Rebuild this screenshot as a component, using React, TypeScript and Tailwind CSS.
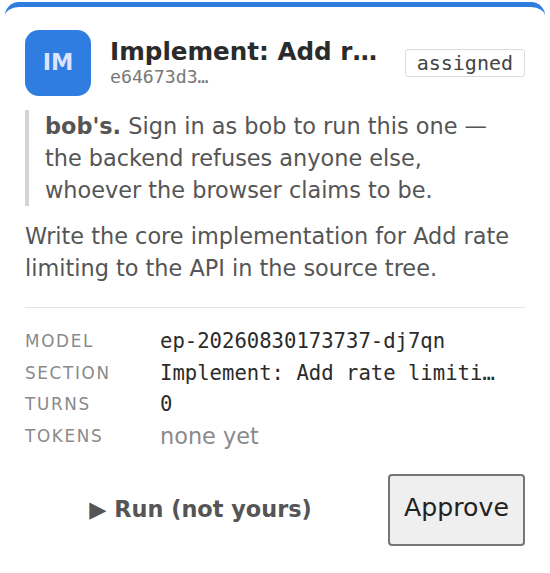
import { useState } from 'react'

const meta = [
  { label: 'Model', value: 'ep-20260830173737-dj7qn', mono: true },
  { label: 'Section', value: 'Implement: Add rate limiting to the API', mono: true },
  { label: 'Turns', value: '0', mono: true },
  { label: 'Tokens', value: 'none yet', mono: false },
]

export default function App() {
  const [approved, setApproved] = useState(false)

  return (
    <div className="min-h-screen bg-white px-[5px] pt-[2px] font-['DejaVu_Sans',sans-serif] text-[#555]">
      <article className="rounded-[14px] border-t-[5px] border-[#2f7de1] bg-white px-5 pb-5 pt-[23px]">
        <header className="flex items-center gap-[19px]">
          <div className="grid size-[66px] shrink-0 place-items-center rounded-[14px] bg-[#2f7de1] text-[22.4px] font-bold text-[#dde3ff]">
            IM
          </div>
          <div className="min-w-0 flex-1 pb-[2px]">
            <h2 className="truncate text-[24.6px] font-bold leading-[29px] text-[#2b2b2b]">
              Implement: Add rate limiting to the API
            </h2>
            <p className="truncate font-['DejaVu_Sans_Mono',monospace] text-[18.2px] leading-[21px] text-[#777]">
              e64673d3…
            </p>
          </div>
          <span className="mt-[19px] shrink-0 self-start rounded-[3px] border border-[#dcdcdc] px-[11px] font-['DejaVu_Sans_Mono',monospace] text-[20px] leading-[26px] text-[#444]">
            assigned
          </span>
        </header>

        <blockquote className="mt-[14px] border-l-[4px] border-[#d4d4d4] pl-[16px] text-[22.4px] leading-[32px]">
          <strong className="font-bold">bob's.</strong> Sign in as bob to run this one — the backend refuses
          anyone else, whoever the browser claims to be.
        </blockquote>

        <p className="mt-[14px] text-[22.4px] leading-[32px]">
          Write the core implementation for Add rate limiting to the API in the source tree.
        </p>

        <dl className="mt-[23px] grid grid-cols-[135px_1fr] border-t-[1.5px] border-[#e4e4e4] pt-[18px] leading-[31.7px]">
          {meta.map((row) => (
            <div className="contents" key={row.label}>
              <dt className="text-[16.8px] uppercase tracking-[0.1em] text-[#8a8a8a]">{row.label}</dt>
              <dd
                className={
                  row.mono
                    ? "truncate pr-[22px] font-['DejaVu_Sans_Mono',monospace] text-[20.6px] text-[#2b2b2b]"
                    : 'truncate pr-[22px] text-[22.4px] text-[#8a8a8a]'
                }
              >
                {row.value}
              </dd>
            </div>
          ))}
        </dl>

        <div className="mt-[21px] flex items-center gap-3">
          <button className="flex-1 cursor-not-allowed text-[22.4px] font-bold text-[#555]" disabled type="button">
            ▶ Run (not yours)
          </button>
          <button
            className="h-[72px] w-[137px] rounded-[4px] border-2 border-[#767676] bg-[#efefef] pb-[3px] text-[25.2px] text-[#222]"
            onClick={() => setApproved(!approved)}
            type="button"
          >
            Approve
          </button>
        </div>
      </article>
    </div>
  )
}
